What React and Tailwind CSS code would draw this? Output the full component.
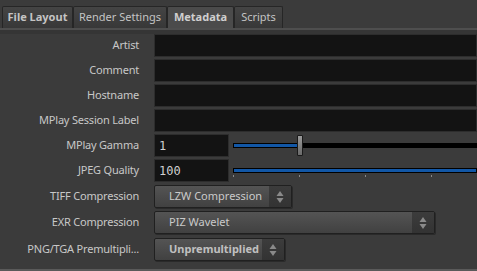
import React from 'react';

const font = { fontFamily: '"Noto Sans", "Open Sans", sans-serif' };

function Tab({ label, active, bold, width }) {
  return (
    <div
      className={`h-[22px] flex items-center justify-center border border-[#262626] border-b-0 rounded-t-[2px] text-[11px] ${
        active ? 'bg-[#4b4b4b] text-[#cfcfcf]' : 'bg-gradient-to-b from-[#444] to-[#383838] text-[#c4c4c4]'
      } ${bold ? 'font-bold' : ''}`}
      style={{ width }}
    >
      {label}
    </div>
  );
}

function Label({ children }) {
  return (
    <div className="w-[154px] shrink-0 pr-[15px] text-right text-[11px] tracking-[-0.2px] text-[#c8c8c8] whitespace-nowrap">
      {children}
    </div>
  );
}

function Field({ value, className = 'flex-1' }) {
  return (
    <div className={`h-[23px] border border-[#2d2d2d] bg-[#131313] flex items-center pl-[4px] text-[12px] text-[#d0d0d0] ${className}`}
      style={{ fontFamily: '"DejaVu Sans Mono", monospace' }}>
      {value}
    </div>
  );
}

function Arrows() {
  return (
    <svg width="8" height="14" viewBox="0 0 8 14">
      <path d="M4 1 L7.5 6 L0.5 6 Z" fill="#8a8a8a" />
      <path d="M4 13 L7.5 8 L0.5 8 Z" fill="#8a8a8a" />
    </svg>
  );
}

function Dropdown({ label, width, bold }) {
  return (
    <div
      className="h-[23px] flex border border-[#202020] rounded-[2px] bg-gradient-to-b from-[#545454] to-[#414141] shadow-[1px_1px_0_#2a2a2a]"
      style={{ width }}
    >
      <div className={`flex-1 flex items-center pl-[14px] text-[11px] ${bold ? 'font-bold text-[#c0c0c0]' : 'text-[#cacaca]'}`}>
        {label}
      </div>
      <div className="w-[22px] flex items-center justify-center bg-gradient-to-b from-[#3c3c3c] to-[#333]">
        <Arrows />
      </div>
    </div>
  );
}

function Row({ label, children, className = '' }) {
  return (
    <div className={`flex items-center ${className}`}>
      <Label>{label}</Label>
      <div className="flex-1 flex items-center">{children}</div>
    </div>
  );
}

export default function App() {
  return (
    <div className="w-[477px] h-[271px] bg-[#3b3b3b] overflow-hidden flex flex-col" style={font}>
      <div className="h-[28px] flex items-end pl-[2px]">
        <Tab label="File Layout" bold width={71} />
        <Tab label="Render Settings" width={94} />
        <Tab label="Metadata" active bold width={67} />
        <Tab label="Scripts" width={49} />
      </div>
      <div className="h-[2px] bg-[#4e4e4e]" />
      <div className="h-[4px] bg-[#353535]" />

      <div className="flex flex-col gap-[2px]">
        <Row label="Artist"><Field /></Row>
        <Row label="Comment"><Field /></Row>
        <Row label="Hostname"><Field /></Row>
        <Row label="MPlay Session Label"><Field /></Row>
        <Row label="MPlay Gamma">
          <Field value="1" className="w-[75px] shrink-0" />
          <div className="flex-1 ml-[4px] relative h-[23px] flex items-center">
            <div className="w-full h-[5px] border border-black bg-black flex">
              <div className="w-[64px] bg-[#1257a6]" />
            </div>
            <div className="absolute left-[64px] top-[1px] w-[6px] h-[21px] border border-[#1a1a1a] rounded-[1px] bg-gradient-to-b from-[#9a9a9a] to-[#6a6a6a]" />
          </div>
        </Row>
        <Row label="JPEG Quality">
          <Field value="100" className="w-[75px] shrink-0" />
          <div className="flex-1 ml-[4px] relative h-[23px] flex items-center">
            <div className="w-full h-[5px] border border-black bg-[#1257a6]" />
            <div className="absolute left-0 right-0 top-[16px] flex">
              <div className="w-[1px] h-[2px] bg-[#8a8a8a]" />
              <div className="ml-[65px] w-[1px] h-[2px] bg-[#8a8a8a]" />
              <div className="ml-[65px] w-[1px] h-[2px] bg-[#8a8a8a]" />
              <div className="ml-[65px] w-[1px] h-[2px] bg-[#8a8a8a]" />
            </div>
          </div>
        </Row>
        <Row label="TIFF Compression" className="mt-[1px]">
          <Dropdown label="LZW Compression" width={138} />
        </Row>
        <Row label="EXR Compression" className="mt-[1px]">
          <Dropdown label="PIZ Wavelet" width={281} />
        </Row>
        <Row label="PNG/TGA Premultipli..." className="mt-[2px]">
          <Dropdown label="Unpremultiplied" width={131} bold />
        </Row>
      </div>
      <div className="flex-1" />
      <div className="h-[2px] bg-[#5a5a5a]" />
    </div>
  );
}
